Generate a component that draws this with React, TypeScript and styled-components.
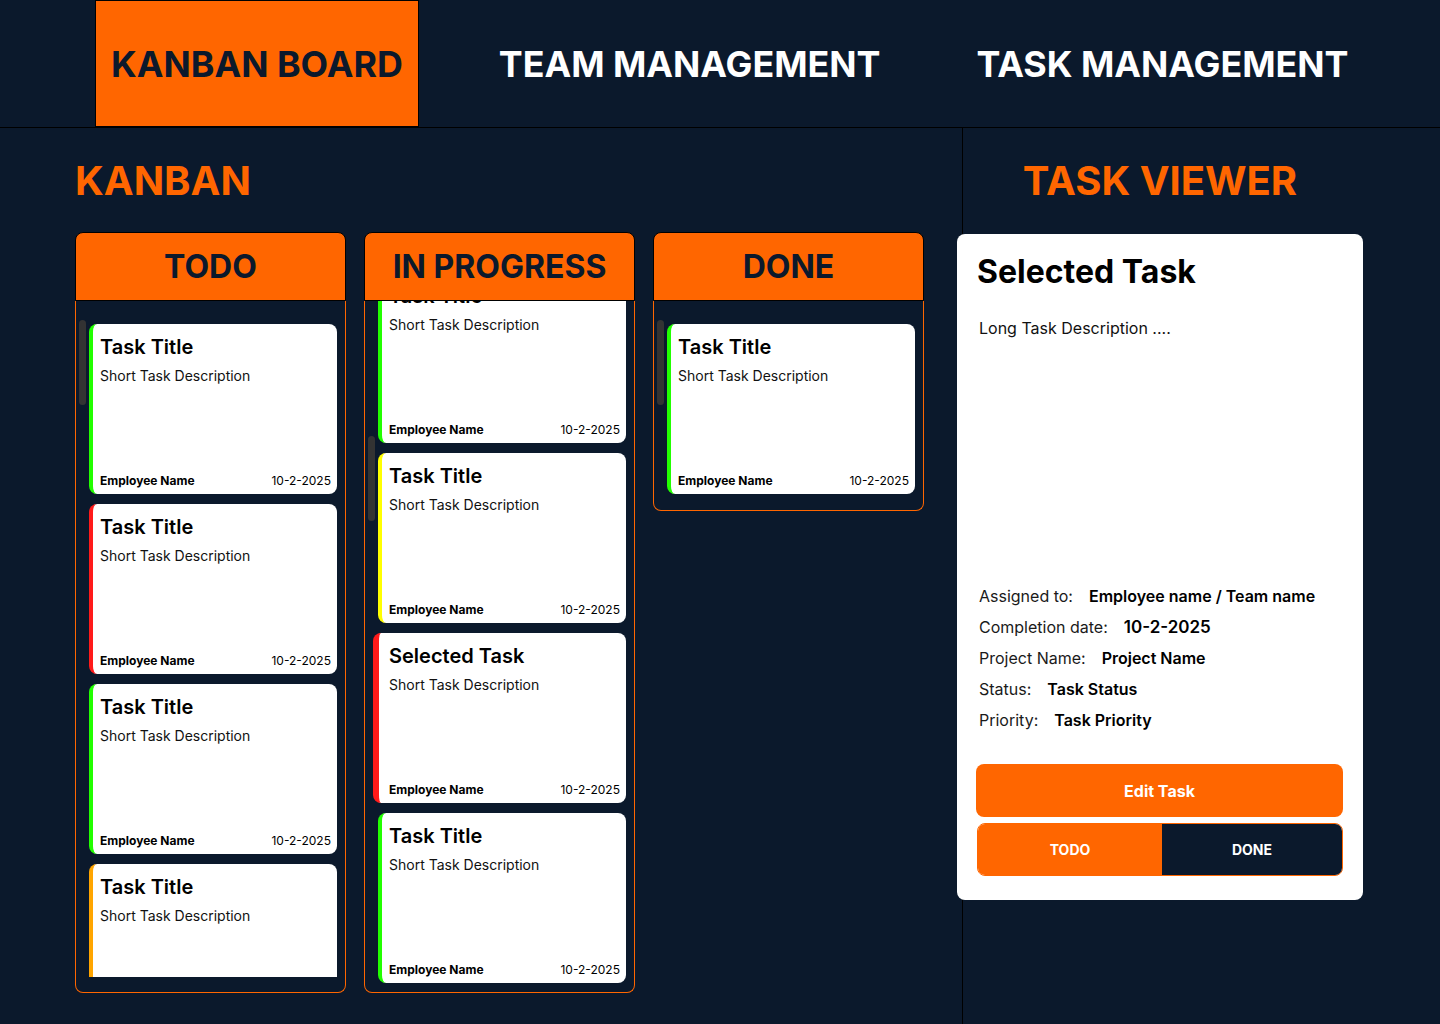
import styled, { createGlobalStyle } from "styled-components";

const NAVY = "#0b192c";
const ORANGE = "#ff6600";

const GlobalStyle = createGlobalStyle`
  html, body {
    margin: 0;
    padding: 0;
    background: ${NAVY};
    font-family: Inter, "Noto Sans", sans-serif;
  }
  * {
    box-sizing: border-box;
  }
`;

const Page = styled.div`
  width: 1440px;
  height: 1024px;
  display: flex;
  flex-direction: column;
  background: ${NAVY};
  overflow: hidden;
`;

const NavBar = styled.nav`
  height: 128px;
  display: flex;
  gap: 64px;
  padding-left: 95px;
  border-bottom: 1px solid #000;
`;

const NavTab = styled.div<{ $active?: boolean }>`
  height: 127px;
  display: flex;
  align-items: center;
  padding: 0 15px;
  font-size: 35.8px;
  font-weight: 700;
  color: ${(p) => (p.$active ? NAVY : "#fff")};
  background: ${(p) => (p.$active ? ORANGE : "transparent")};
  border: 1px solid ${(p) => (p.$active ? "#000" : "transparent")};
`;

const Main = styled.main`
  flex: 1;
  display: grid;
  grid-template-columns: 963px 1fr;
`;

const KanbanSection = styled.section`
  border-right: 1px solid #000;
  padding: 29px 0 0 75px;
`;

const SectionTitle = styled.h1`
  margin: 0;
  font-size: 40px;
  line-height: 48px;
  font-weight: 700;
  color: ${ORANGE};
`;

const Columns = styled.div`
  display: flex;
  align-items: flex-start;
  gap: 18px;
  margin-top: 27px;
`;

const Column = styled.div`
  width: 271px;
  display: flex;
  flex-direction: column;
`;

const ColumnHeader = styled.div`
  height: 69px;
  display: flex;
  align-items: center;
  justify-content: center;
  background: ${ORANGE};
  border: 1px solid #000;
  border-radius: 8px 8px 0 0;
  font-size: 32px;
  font-weight: 700;
  color: ${NAVY};
`;

const ColumnBody = styled.div<{ $height?: number; $bottom: number }>`
  display: flex;
  gap: 3px;
  height: ${(p) => (p.$height ? `${p.$height}px` : "auto")};
  padding: 0 8px ${(p) => p.$bottom}px 3px;
  border: 1px solid ${ORANGE};
  border-top: none;
  border-radius: 0 0 8px 8px;
`;

const Track = styled.div`
  width: 7px;
  flex-shrink: 0;
`;

const Thumb = styled.div<{ $top: number }>`
  margin-top: ${(p) => p.$top}px;
  height: 85px;
  border-radius: 4px;
  background: #333;
`;

const Viewport = styled.div`
  flex: 1;
  min-width: 0;
  overflow-x: visible;
  overflow-y: clip;
`;

const CardList = styled.div<{ $offset: number }>`
  display: flex;
  flex-direction: column;
  gap: 10px;
  padding-top: 23px;
  margin-top: -${(p) => p.$offset}px;
`;

const Card = styled.div<{ $color: string; $selected?: boolean }>`
  position: relative;
  height: 170px;
  display: flex;
  flex-direction: column;
  background: #fff;
  border-radius: 8px;
  border-left: ${(p) => (p.$selected ? 6 : 4)}px solid ${(p) => p.$color};
  padding: 11px 6px 6px ${(p) => (p.$selected ? 10 : 7)}px;
  margin-left: ${(p) => (p.$selected ? -5 : 0)}px;
  flex-shrink: 0;
`;

const CardTitle = styled.div`
  font-size: 20px;
  line-height: 24px;
  font-weight: 600;
  color: #000;
`;

const CardDesc = styled.div`
  margin-top: 8px;
  font-size: 14px;
  line-height: 17px;
  color: #111;
`;

const CardFooter = styled.div`
  margin-top: auto;
  display: flex;
  justify-content: space-between;
  align-items: flex-end;
  font-size: 12px;
  line-height: 15px;
  color: #000;
`;

const Employee = styled.span`
  font-weight: 700;
`;

const ViewerSection = styled.section`
  padding-top: 29px;
  display: flex;
  flex-direction: column;
`;

const ViewerTitle = styled(SectionTitle)`
  width: 406px;
  margin-left: -6px;
  text-align: center;
`;

const ViewerCard = styled.div`
  width: 406px;
  height: 666px;
  margin: 29px 0 0 -6px;
  background: #fff;
  border-radius: 8px;
  padding: 19px 20px 24px;
  display: flex;
  flex-direction: column;
`;

const ViewerHeading = styled.h2`
  margin: 0;
  font-size: 32px;
  line-height: 38px;
  font-weight: 700;
  color: #000;
`;

const LongDesc = styled.p`
  flex: 1;
  margin: 27px 0 0 2px;
  font-size: 16px;
  line-height: 20px;
  color: #111;
`;

const Details = styled.div`
  display: flex;
  flex-direction: column;
  gap: 11px;
  padding-left: 2px;
  margin-bottom: 34px;
`;

const DetailRow = styled.div`
  display: flex;
  align-items: baseline;
  gap: 16px;
  font-size: 16px;
  line-height: 20px;
  color: #1a1a1a;
`;

const DetailValue = styled.span<{ $big?: boolean }>`
  font-weight: 600;
  font-size: ${(p) => (p.$big ? 17 : 16)}px;
  color: #000;
`;

const EditButton = styled.button`
  height: 53px;
  border: 0;
  border-radius: 8px;
  background: ${ORANGE};
  color: #fff;
  font-family: inherit;
  font-size: 16px;
  font-weight: 700;
  margin-left: -1px;
`;

const Toggle = styled.div`
  margin-top: 6px;
  height: 53px;
  display: grid;
  grid-template-columns: 184px 1fr;
  border: 1px solid ${ORANGE};
  border-radius: 8px;
  overflow: hidden;
`;

const ToggleOption = styled.div<{ $on?: boolean }>`
  display: flex;
  align-items: center;
  justify-content: center;
  background: ${(p) => (p.$on ? ORANGE : NAVY)};
  color: #fff;
  font-size: 14px;
  font-weight: 700;
`;

type Task = { title: string; color: string; selected?: boolean };

const GREEN = "#22ff00";
const RED = "#ff1a1a";
const YELLOW = "#ffff00";
const AMBER = "#ffa500";

const columns: {
  name: string;
  tasks: Task[];
  height?: number;
  bottom: number;
  offset: number;
  thumb: number;
}[] = [
  {
    name: "TODO",
    tasks: [
      { title: "Task Title", color: GREEN },
      { title: "Task Title", color: RED },
      { title: "Task Title", color: GREEN },
      { title: "Task Title", color: AMBER },
    ],
    height: 692,
    bottom: 15,
    offset: 0,
    thumb: 19,
  },
  {
    name: "IN PROGRESS",
    tasks: [
      { title: "Task Title", color: GREEN },
      { title: "Task Title", color: YELLOW },
      { title: "Selected Task", color: RED, selected: true },
      { title: "Task Title", color: GREEN },
    ],
    height: 692,
    bottom: 0,
    offset: 51,
    thumb: 135,
  },
  {
    name: "DONE",
    tasks: [{ title: "Task Title", color: GREEN }],
    bottom: 16,
    offset: 0,
    thumb: 19,
  },
];

const details = [
  { label: "Assigned to:", value: "Employee name / Team name" },
  { label: "Completion date:", value: "10-2-2025", big: true },
  { label: "Project Name:", value: "Project Name" },
  { label: "Status:", value: "Task Status" },
  { label: "Priority:", value: "Task Priority" },
];

export default function App() {
  return (
    <Page>
      <GlobalStyle />
      <NavBar>
        <NavTab $active>KANBAN BOARD</NavTab>
        <NavTab>TEAM MANAGEMENT</NavTab>
        <NavTab>TASK MANAGEMENT</NavTab>
      </NavBar>

      <Main>
        <KanbanSection>
          <SectionTitle>KANBAN</SectionTitle>
          <Columns>
            {columns.map((col) => (
              <Column key={col.name}>
                <ColumnHeader>{col.name}</ColumnHeader>
                <ColumnBody $height={col.height} $bottom={col.bottom}>
                  <Track>
                    <Thumb $top={col.thumb} />
                  </Track>
                  <Viewport>
                    <CardList $offset={col.offset}>
                      {col.tasks.map((task, i) => (
                        <Card key={i} $color={task.color} $selected={task.selected}>
                          <CardTitle>{task.title}</CardTitle>
                          <CardDesc>Short Task Description</CardDesc>
                          <CardFooter>
                            <Employee>Employee Name</Employee>
                            <span>10-2-2025</span>
                          </CardFooter>
                        </Card>
                      ))}
                    </CardList>
                  </Viewport>
                </ColumnBody>
              </Column>
            ))}
          </Columns>
        </KanbanSection>

        <ViewerSection>
          <ViewerTitle>TASK VIEWER</ViewerTitle>
          <ViewerCard>
            <ViewerHeading>Selected Task</ViewerHeading>
            <LongDesc>Long Task Description ....</LongDesc>
            <Details>
              {details.map((d) => (
                <DetailRow key={d.label}>
                  <span>{d.label}</span>
                  <DetailValue $big={d.big}>{d.value}</DetailValue>
                </DetailRow>
              ))}
            </Details>
            <EditButton>Edit Task</EditButton>
            <Toggle>
              <ToggleOption $on>TODO</ToggleOption>
              <ToggleOption>DONE</ToggleOption>
            </Toggle>
          </ViewerCard>
        </ViewerSection>
      </Main>
    </Page>
  );
}
